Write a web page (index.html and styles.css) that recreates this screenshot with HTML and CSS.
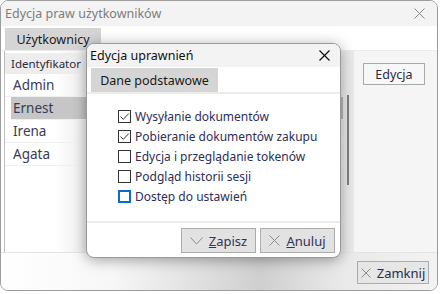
FILE: index.html
```html
<!DOCTYPE html>
<html lang="pl">
<head>
  <meta charset="UTF-8" />
  <title>Edycja praw użytkowników</title>
  <link rel="stylesheet" href="styles.css">
</head>
<body>
  <!-- Main window -->
  <div class="window">
    <div class="titlebar">
      <span class="title">Edycja praw użytkowników</span>
      <svg class="close-x light" width="11" height="11" viewBox="0 0 11 11">
        <path d="M0.5 0.5 L10.5 10.5 M10.5 0.5 L0.5 10.5" stroke="#8a8a8a" stroke-width="1" fill="none"/>
      </svg>
    </div>

    <div class="tabstrip">
      <div class="tab">Użytkownicy</div>
    </div>

    <div class="main">
      <div class="list">
        <div class="list-head">Identyfikator</div>
        <div class="row">Admin</div>
        <div class="row selected">Ernest</div>
        <div class="row">Irena</div>
        <div class="row">Agata</div>
      </div>
      <div class="scroll"><div class="thumb"></div></div>
      <div class="side">
        <button class="btn edit">Edycja</button>
      </div>
    </div>

    <div class="footer">
      <button class="btn close-btn">
        <svg width="10" height="10" viewBox="0 0 10 10">
          <path d="M0.5 0.5 L9.5 9.5 M9.5 0.5 L0.5 9.5" stroke="#8c8c8c" stroke-width="1" fill="none"/>
        </svg>
        Zamknij
      </button>
    </div>
  </div>

  <!-- Modal dialog on top -->
  <div class="dialog">
    <div class="dlg-title">
      <span>Edycja uprawnień</span>
      <svg class="close-x" width="11" height="11" viewBox="0 0 11 11">
        <path d="M0.5 0.5 L10.5 10.5 M10.5 0.5 L0.5 10.5" stroke="#111" stroke-width="1.2" fill="none"/>
      </svg>
    </div>
    <div class="dlg-tabs">
      <div class="tab dlg-tab">Dane podstawowe</div>
    </div>

    <div class="dlg-content">
      <label class="check"><span class="box checked"><svg width="11" height="11" viewBox="0 0 11 11"><path d="M1.5 5.5 L4.3 8.3 L9.8 2.5" stroke="#333" stroke-width="1" fill="none"/></svg></span>Wysyłanie dokumentów</label>
      <label class="check"><span class="box checked"><svg width="11" height="11" viewBox="0 0 11 11"><path d="M1.5 5.5 L4.3 8.3 L9.8 2.5" stroke="#333" stroke-width="1" fill="none"/></svg></span>Pobieranie dokumentów zakupu</label>
      <label class="check"><span class="box"></span>Edycja i przeglądanie tokenów</label>
      <label class="check"><span class="box"></span>Podgląd historii sesji</label>
      <label class="check"><span class="box focus"></span>Dostęp do ustawień</label>
    </div>

    <div class="dlg-footer">
      <button class="btn">
        <svg width="13" height="8" viewBox="0 0 13 8">
          <path d="M0.5 0.5 L6.5 7 L12.5 0.5" stroke="#8c8c8c" stroke-width="1" fill="none"/>
        </svg>
        <span><u>Z</u>apisz</span>
      </button>
      <button class="btn">
        <svg width="11" height="11" viewBox="0 0 11 11">
          <path d="M0.5 0.5 L10.5 10.5 M10.5 0.5 L0.5 10.5" stroke="#8c8c8c" stroke-width="1" fill="none"/>
        </svg>
        <span><u>A</u>nuluj</span>
      </button>
    </div>
  </div>
</body>
</html>
```

FILE: styles.css
```css
/* Reset & base */
* {
  margin: 0;
  padding: 0;
  box-sizing: border-box;
}
html, body {
  width: 100%;
  height: 100%;
  overflow: hidden;
  background: #fff;
  font-family: "Noto Sans", "Open Sans", sans-serif;
  color: #1a1a1a;
}

/* Main window */
.window {
  width: 438px;
  height: 291px;
  border: 1px solid #9c9c9c;
  border-radius: 8px;
  overflow: hidden;
  display: flex;
  flex-direction: column;
  background: #fff;
}
.titlebar {
  height: 25px;
  background: #f3f3f3;
  display: flex;
  align-items: center;
  justify-content: space-between;
  padding: 0 12px 0 4px;
}
.titlebar .title {
  font-size: 12.5px;
  color: #7c7c7c;
}
.close-x {
  display: block;
}

/* Tabs */
.tabstrip {
  height: 25px;
  background: #fff;
  border-bottom: 1px solid #ebebeb;
  display: flex;
  align-items: flex-end;
  padding-left: 4px;
}
.tab {
  height: 22px;
  width: 96px;
  background: #d5d5d5;
  font-size: 12.5px;
  display: flex;
  align-items: center;
  justify-content: center;
  color: #1a1a1a;
}

/* Middle part */
.main {
  flex: 1;
  display: flex;
  border-bottom: 1px solid #e4e4e4;
}
.list {
  width: 339px;
  margin-left: 3px;
  border-left: 1px solid #bdbdbd;
  background: linear-gradient(to right, #fff 0, #fff 50px, #ececec 82px);
}
.list-head {
  height: 21px;
  margin-top: 2px;
  background: #ededed;
  font-size: 11.5px;
  padding-left: 6px;
  display: flex;
  align-items: center;
  color: #2a2a3a;
}
.row {
  height: 23px;
  border-bottom: 1px solid #f0f0f0;
  font-size: 13.5px;
  padding-left: 8px;
  display: flex;
  align-items: center;
  color: #3a3a55;
}
.row.selected {
  background: linear-gradient(to right, #c6c6c6 0, #c6c6c6 70px, #b9b9b9 82px);
  margin-left: 6px;
  padding-left: 2px;
}
.scroll {
  width: 11px;
  background: #e9e9e9;
  padding: 44px 0 0 4px;
}
.thumb {
  width: 2px;
  height: 90px;
  background: #7f7f7f;
}
.side {
  flex: 1;
  background: #f5f5f5;
  padding: 12px 0 0 9px;
}

/* Buttons */
.btn {
  font-family: "Noto Sans", "Open Sans", sans-serif;
  font-size: 12.5px;
  color: #2a2a4a;
  background: #e2e2e2;
  border: 1px solid #acacac;
  display: flex;
  align-items: center;
  justify-content: center;
  gap: 6px;
}
.btn.edit {
  width: 62px;
  height: 22px;
  background: #f7f7f7;
  border-color: #a9a9a9;
}
.footer {
  height: 37px;
  background: linear-gradient(to right, #fff 0, #f7f7f7 110px, #cfcfcf 260px, #e9e9e9 340px, #f2f2f2 100%);
  display: flex;
  justify-content: flex-end;
  align-items: flex-start;
  padding: 8px 8px 0 0;
}
.btn.close-btn {
  width: 72px;
  height: 23px;
  background: #e6e6e6;
  font-size: 13px;
}

/* Dialog */
.dialog {
  position: absolute;
  left: 86px;
  top: 43px;
  width: 255px;
  height: 215px;
  background: #fff;
  border: 1px solid #9a9a9a;
  border-radius: 8px;
  overflow: hidden;
  box-shadow: 0 2px 14px rgba(0, 0, 0, 0.35);
  display: flex;
  flex-direction: column;
}
.dlg-title {
  height: 23px;
  background: #f3f3f3;
  display: flex;
  align-items: center;
  justify-content: space-between;
  padding: 0 10px 0 3px;
  font-size: 12.5px;
  color: #111;
}
.dlg-tabs {
  height: 27px;
  border-bottom: 2px solid #ececec;
  display: flex;
  align-items: flex-end;
  padding-left: 4px;
}
.dlg-tab {
  width: 127px;
  height: 24px;
}
.dlg-content {
  flex: 1;
  padding: 16px 0 0 31px;
  display: flex;
  flex-direction: column;
  gap: 7px;
}
.check {
  display: flex;
  align-items: center;
  gap: 4px;
  font-size: 12px;
  color: #2e2e58;
  height: 13px;
}
.box {
  width: 13px;
  height: 13px;
  border: 1px solid #333;
  display: flex;
  align-items: center;
  justify-content: center;
}
.box.focus {
  border: 2px solid #0a6cd0;
}
.dlg-footer {
  height: 36px;
  border-top: 2px solid #ececec;
  display: flex;
  justify-content: flex-end;
  gap: 4px;
  padding: 5px 5px 0 0;
}
.dlg-footer .btn {
  width: 75px;
  height: 25px;
  font-size: 13px;
  color: #333355;
}
```
